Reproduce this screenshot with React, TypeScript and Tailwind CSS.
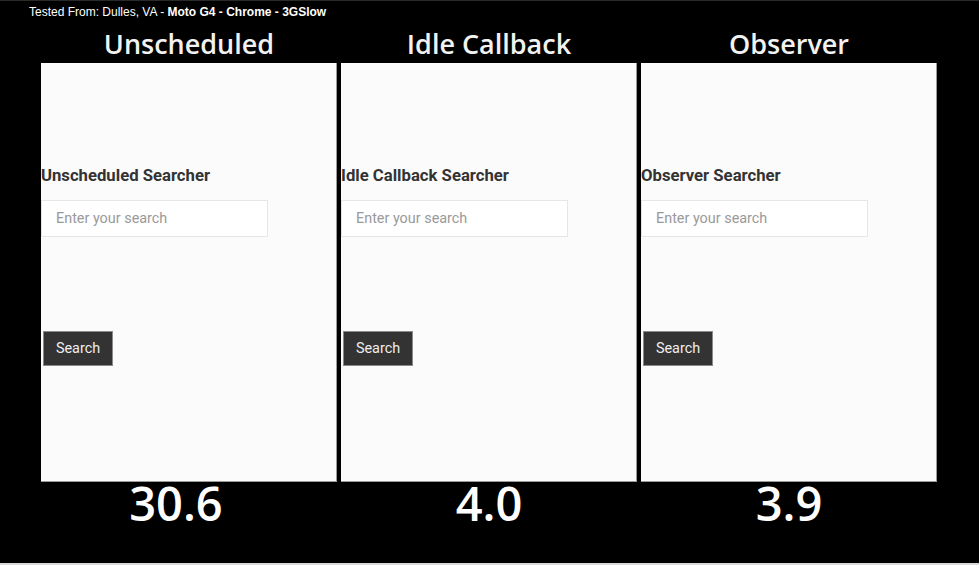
const panels = [
  { title: "Unscheduled", heading: "Unscheduled Searcher", score: "30.6", shift: "pr-[26px]" },
  { title: "Idle Callback", heading: "Idle Callback Searcher", score: "4.0", shift: "" },
  { title: "Observer", heading: "Observer Searcher", score: "3.9", shift: "" },
];

function Screen({ heading }: { heading: string }) {
  return (
    <div className="h-[419px] w-[296px] border-r border-b border-[#9a9a9a] bg-[#fbfbfb] pt-[103px] font-['Roboto',sans-serif]">
      <h3 className="h-5 text-[16.7px] leading-5 font-bold text-[#333]">{heading}</h3>
      <div className="mt-[14px] flex h-[37px] w-[227px] items-center border border-[#e6e6e6] bg-white pl-[14px] text-[14.4px] text-[#9a9a9a]">
        Enter your search
      </div>
      <button className="mt-[94px] ml-[2px] h-[35px] w-[70px] border border-[#8a8a8a] bg-[#333] text-[14.4px] text-[#eee]">
        Search
      </button>
    </div>
  );
}

export default function App() {
  return (
    <div className="h-[565px] w-[979px] border-t border-b-2 border-t-[#2a2a2a] border-b-[#d8d8d8] bg-black">
      <p className="pt-[4px] pl-[29px] font-['Liberation_Sans',Arial,sans-serif] text-[12px] leading-[15px] text-white">
        Tested From: Dulles, VA - <b>Moto G4 - Chrome - 3GSlow</b>
      </p>
      <div className="flex gap-1 pl-[41px]">
        {panels.map((p) => (
          <div key={p.title} className="flex w-[296px] flex-col items-center">
            <h2 className="mt-[6px] h-[37px] font-['Open_Sans',sans-serif] text-[27px] leading-[36px] font-semibold text-[#f2f2f2]">
              {p.title}
            </h2>
            <Screen heading={p.heading} />
            <div className={`-mt-[3px] font-['Open_Sans',sans-serif] text-[47px] leading-[48px] font-semibold text-white ${p.shift}`}>
              {p.score}
            </div>
          </div>
        ))}
      </div>
    </div>
  );
}
